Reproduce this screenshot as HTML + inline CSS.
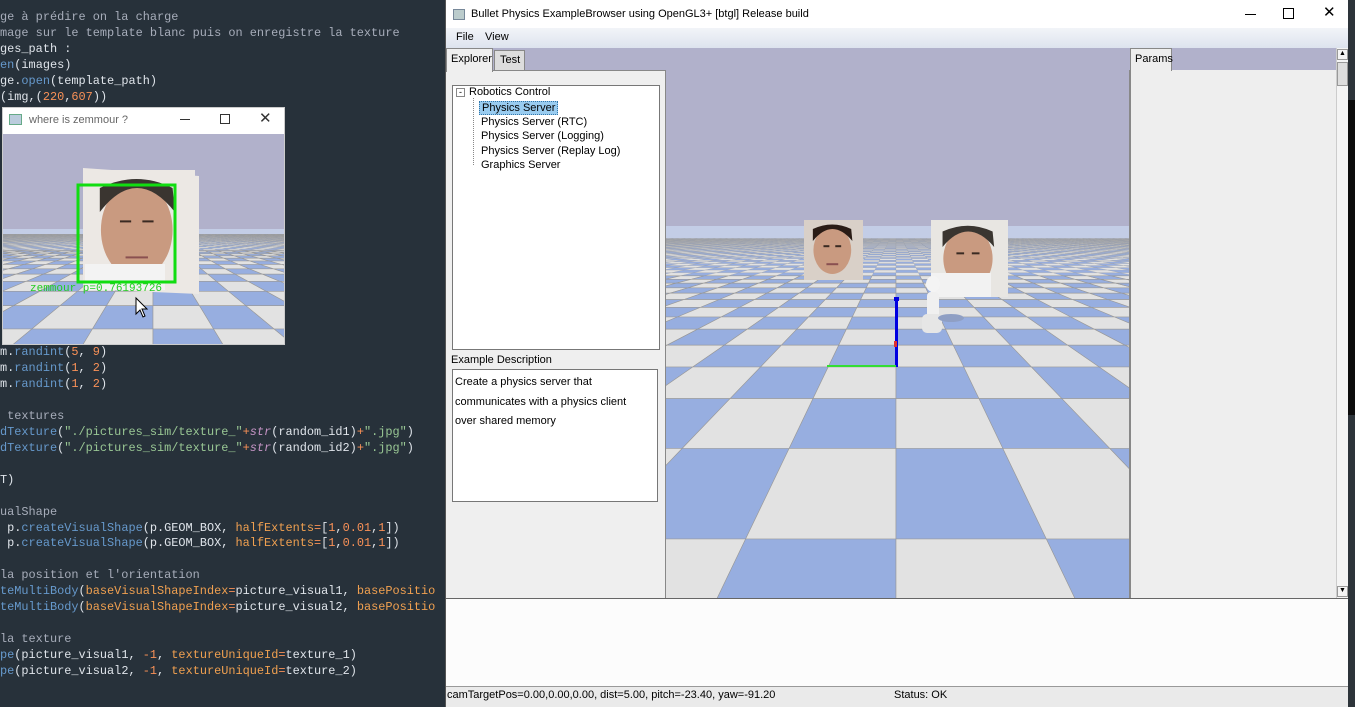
<!DOCTYPE html>
<html><head><meta charset="utf-8">
<style>
*{margin:0;padding:0;box-sizing:border-box}
html,body{width:1355px;height:707px;overflow:hidden}
body{background:#27313a;position:relative;font-family:"Liberation Sans",sans-serif}
.abs{position:absolute}
#code{left:0;top:10px;font-family:"Liberation Mono",monospace;font-size:11.9px;line-height:15.95px;color:#dfe4ea;white-space:pre;height:690px;overflow:hidden}
.c{color:#a7adba}.f{color:#6699cc}.n{color:#f99157}.s{color:#99c794}.o{color:#f0a050}.i{color:#c594c5;font-style:italic}
.ui{font-size:11px;color:#000}
</style></head><body>
<div id="code" class="abs"><span class="c">ge à prédire on la charge</span>
<span class="c">mage sur le template blanc puis on enregistre la texture</span>
ges_path :
<span class="f">en</span>(images)
ge.<span class="f">open</span>(template_path)
(img,(<span class="n">220</span>,<span class="n">607</span>))
 
 
 
 
 
 
 
 
 
 
 
 
 
 
 
m.<span class="f">randint</span>(<span class="n">5</span>, <span class="n">9</span>)
m.<span class="f">randint</span>(<span class="n">1</span>, <span class="n">2</span>)
m.<span class="f">randint</span>(<span class="n">1</span>, <span class="n">2</span>)
 
<span class="c"> textures</span>
<span class="f">dTexture</span>(<span class="s">"./pictures_sim/texture_"</span><span class="n">+</span><span class="i f">str</span>(random_id1)<span class="n">+</span><span class="s">".jpg"</span>)
<span class="f">dTexture</span>(<span class="s">"./pictures_sim/texture_"</span><span class="n">+</span><span class="i f">str</span>(random_id2)<span class="n">+</span><span class="s">".jpg"</span>)
 
T)
 
<span class="c">ualShape</span>
 p.<span class="f">createVisualShape</span>(p.GEOM_BOX, <span class="o">halfExtents</span><span class="n">=</span>[<span class="n">1</span>,<span class="n">0.01</span>,<span class="n">1</span>])
 p.<span class="f">createVisualShape</span>(p.GEOM_BOX, <span class="o">halfExtents</span><span class="n">=</span>[<span class="n">1</span>,<span class="n">0.01</span>,<span class="n">1</span>])
 
<span class="c">la position et l'orientation</span>
<span class="f">teMultiBody</span>(<span class="o">baseVisualShapeIndex</span><span class="n">=</span>picture_visual1, <span class="o">basePositio</span>
<span class="f">teMultiBody</span>(<span class="o">baseVisualShapeIndex</span><span class="n">=</span>picture_visual2, <span class="o">basePositio</span>
 
<span class="c">la texture</span>
<span class="f">pe</span>(picture_visual1, <span class="n">-1</span>, <span class="o">textureUniqueId</span><span class="n">=</span>texture_1)
<span class="f">pe</span>(picture_visual2, <span class="n">-1</span>, <span class="o">textureUniqueId</span><span class="n">=</span>texture_2)</div>

<div class="abs" style="left:2px;top:107px;width:283px;height:238px;background:#fff;border:1px solid #ccc;overflow:hidden">
 <div class="abs" style="left:6px;top:6px;width:13px;height:11px;border:1px solid #6a8;background:#bcd"></div>
 <div class="abs" style="left:26px;top:6px;font-size:11px;color:#666">where is zemmour ?</div>
 <div class="abs" style="left:177px;top:11px;width:10px;height:1px;background:#333"></div>
 <div class="abs" style="left:217px;top:6px;width:10px;height:10px;border:1px solid #333"></div>
 <div class="abs" style="left:256px;top:1px;font-size:15px;color:#333">✕</div>
 <svg class="abs" id="s2" style="left:0;top:26px" width="283" height="211"></svg>
</div>

<div class="abs" style="left:1348px;top:0;width:7px;height:707px;background:#2d343a"></div>
<div class="abs" style="left:1348px;top:100px;width:7px;height:315px;background:#0c0c0c"></div>

<div class="abs" style="left:445px;top:0;width:903px;height:707px;background:#f0f0f0;border-left:1px solid #555;overflow:hidden">
 <div class="abs" style="left:0;top:0;width:903px;height:30px;background:#fff"></div>
 <div class="abs" style="left:7px;top:9px;width:12px;height:11px;border:1px solid #789;background:#bcc"></div>
 <div class="abs" style="left:25px;top:8px;font-size:11px;color:#000">Bullet Physics ExampleBrowser using OpenGL3+ [btgl] Release build</div>
 <div class="abs" style="left:799px;top:14px;width:11px;height:1px;background:#000"></div>
 <div class="abs" style="left:837px;top:8px;width:11px;height:11px;border:1px solid #000"></div>
 <div class="abs" style="left:877px;top:3px;font-size:15px">✕</div>
 <div class="abs" style="left:0;top:28px;width:903px;height:20px;background:linear-gradient(#f2f4f8,#dde3ee)"></div>
 <div class="abs ui" style="left:10px;top:31px">File</div>
 <div class="abs ui" style="left:39px;top:31px">View</div>
 <div class="abs" style="left:0;top:48px;width:220px;height:550px;background:#b1b1cb"></div>
 <div class="abs" style="left:0;top:70px;width:220px;height:529px;background:#efefef;border:1px solid #888;border-left:none"></div>
 <div class="abs ui" style="left:0;top:48px;width:47px;height:24px;background:#efefef;border:1px solid #888;border-bottom:none;padding:4px 0 0 4px">Explorer</div>
 <div class="abs ui" style="left:48px;top:50px;width:31px;height:21px;background:#ddd;border:1px solid #888;padding:3px 0 0 5px">Test</div>
 <div class="abs" style="left:6px;top:85px;width:208px;height:265px;background:#fff;border:1px solid #777"></div>
 <div class="abs" style="left:10px;top:88px;width:9px;height:9px;border:1px solid #888;font-size:9px;line-height:6px;text-align:center">-</div>
 <div class="abs" style="left:27px;top:98px;width:1px;height:67px;border-left:1px dotted #888"></div>
 <div class="abs ui" style="left:23px;top:86px">Robotics Control</div>
 <div class="abs ui" style="left:33px;top:101px;background:#99ccf0;border:1px dotted #37a;padding:0 2px">Physics Server</div>
 <div class="abs ui" style="left:35px;top:115px;line-height:14.3px">Physics Server (RTC)<br>Physics Server (Logging)<br>Physics Server (Replay Log)<br>Graphics Server</div>
 <div class="abs ui" style="left:5px;top:354px">Example Description</div>
 <div class="abs ui" style="left:6px;top:369px;width:206px;height:133px;background:#fff;border:1px solid #777;padding:3px 2px;line-height:19.5px">Create a physics server that<br>communicates with a physics client<br>over shared memory</div>
 <svg class="abs" id="s1" style="left:220px;top:48px" width="463" height="550"></svg>
 <div class="abs" style="left:683px;top:48px;width:207px;height:550px;background:#b1b1cb"></div>
 <div class="abs" style="left:683px;top:70px;width:207px;height:529px;background:#eeeeee;border-left:2px solid #888"></div>
 <div class="abs ui" style="left:684px;top:48px;width:42px;height:23px;background:#eee;border:1px solid #888;border-bottom:none;padding:4px 0 0 4px">Params</div>
 <div class="abs" style="left:890px;top:48px;width:13px;height:550px;background:#f4f4f4;border-left:1px solid #ccc"></div>
 <div class="abs" style="left:891px;top:49px;width:11px;height:11px;border:1px solid #999;font-size:7px;text-align:center">▲</div>
 <div class="abs" style="left:891px;top:62px;width:11px;height:24px;border:1px solid #999;background:#ddd"></div>
 <div class="abs" style="left:891px;top:586px;width:11px;height:11px;border:1px solid #999;font-size:7px;text-align:center">▼</div>
 <div class="abs" style="left:0;top:598px;width:903px;height:89px;background:#fcfcfc;border-top:1px solid #666"></div>
 <div class="abs" style="left:0;top:686px;width:903px;height:21px;background:#eaeaea;border-top:1px solid #999"></div>
 <div class="abs ui" style="left:1px;top:689px">camTargetPos=0.00,0.00,0.00, dist=5.00, pitch=-23.40, yaw=-91.20</div>
 <div class="abs ui" style="left:448px;top:689px">Status: OK</div>
</div>

<script>
var NS="http://www.w3.org/2000/svg";
function el(svg,t,a){var e=document.createElementNS(NS,t);for(var k in a)e.setAttribute(k,a[k]);svg.appendChild(e);return e}
function checker(svg,w,h,cx,hy,K,K2,z0,par,far){
 el(svg,'rect',{x:0,y:0,width:w,height:h,fill:'#b1b1cb'});
 el(svg,'rect',{x:0,y:hy,width:w,height:h-hy,fill:far});
 for(var n=60;n>=0;n--){
  var za=z0+n,zb=z0+n+1; if(za<=0.05)continue;
  for(var X=-60;X<60;X++){
   var c=((X+n)%2+2)%2==par?'#e2e2e2':'#97aee0';
   var p=[[cx+K2*X/za,hy+K/za],[cx+K2*(X+1)/za,hy+K/za],[cx+K2*(X+1)/zb,hy+K/zb],[cx+K2*X/zb,hy+K/zb]];
   if(Math.max(p[0][0],p[1][0],p[2][0],p[3][0])<0||Math.min(p[0][0],p[1][0],p[2][0],p[3][0])>w)continue;
   el(svg,'polygon',{points:p.map(function(q){return q[0].toFixed(1)+','+q[1].toFixed(1)}).join(' '),fill:c,stroke:'#999',"stroke-width":n<15?0.6:0.2});
  }
 }
}
var s1=document.getElementById('s1');
checker(s1,463,550,230,178,770,370,0.46,1,'#c3cde6');
function face(svg,x,y,w,h,hair,bg){
 el(svg,'rect',{x:x,y:y,width:w,height:h,fill:bg});
 el(svg,'ellipse',{cx:x+w*0.48,cy:y+h*0.5,rx:w*0.32,ry:h*0.4,fill:'#c99a80'});
 el(svg,'path',{d:'M'+(x+w*0.15)+' '+(y+h*0.35)+' Q'+(x+w*0.48)+' '+(y-h*0.05)+' '+(x+w*0.82)+' '+(y+h*0.35)+' L'+(x+w*0.8)+' '+(y+h*0.15)+' Q'+(x+w*0.48)+' '+(y)+' '+(x+w*0.15)+' '+(y+h*0.15)+'Z',fill:hair});
 el(svg,'rect',{x:x+w*0.33,y:y+h*0.42,width:w*0.1,height:2,fill:'#3a2a22'});
 el(svg,'rect',{x:x+w*0.53,y:y+h*0.42,width:w*0.1,height:2,fill:'#3a2a22'});
 el(svg,'rect',{x:x+w*0.38,y:y+h*0.72,width:w*0.2,height:2,fill:'#8a5050'});
}
face(s1,138,172,59,60,'#2a1c16','#d9d0c8');
face(s1,265,172,77,77,'#3a3530','#e8e6e2');
el(s1,'rect',{x:265,y:225,width:60,height:24,fill:'#f2f2f2'});
el(s1,'ellipse',{cx:267,cy:236,rx:7,ry:8,fill:'#f4f4f4'});
el(s1,'rect',{x:261,y:244,width:12,height:28,fill:'#f0f0f0',rx:4});
el(s1,'rect',{x:256,y:266,width:20,height:19,fill:'#e6e6e6',rx:5});
el(s1,'ellipse',{cx:285,cy:270,rx:13,ry:4,fill:'#8f9fc4'});
el(s1,'rect',{x:229,y:249,width:3,height:70,fill:'#0000e0'});
el(s1,'rect',{x:228,y:249,width:5,height:4,fill:'#0000e0'});
el(s1,'rect',{x:161,y:317,width:69,height:2,fill:'#33dd33'});
el(s1,'rect',{x:228,y:293,width:3,height:6,fill:'#e03030'});
var s2=document.getElementById('s2');
checker(s2,283,211,150,95,330,200,0.3,1,'#c3cde6');
el(s2,'polygon',{points:'80,34 196,42 196,160 80,155',fill:'#ece8e4'});
face(s2,80,36,112,120,'#3a3530','#ece8e4');
el(s2,'rect',{x:82,y:130,width:80,height:26,fill:'#f3f3f3'});
el(s2,'rect',{x:75,y:51,width:97,height:97,fill:'none',stroke:'#11dd11',"stroke-width":3});
var t=el(s2,'text',{x:27,y:157,fill:'#22cc22',"font-family":'Liberation Mono,monospace',"font-size":'11'});t.textContent='zemmour p=0.76193726';
el(s2,'path',{d:'M133 164 L133 180 L137 176 L140 183 L142 182 L139 175 L144 175 Z',fill:'#fff',stroke:'#000',"stroke-width":1});
</script>
</body></html>
